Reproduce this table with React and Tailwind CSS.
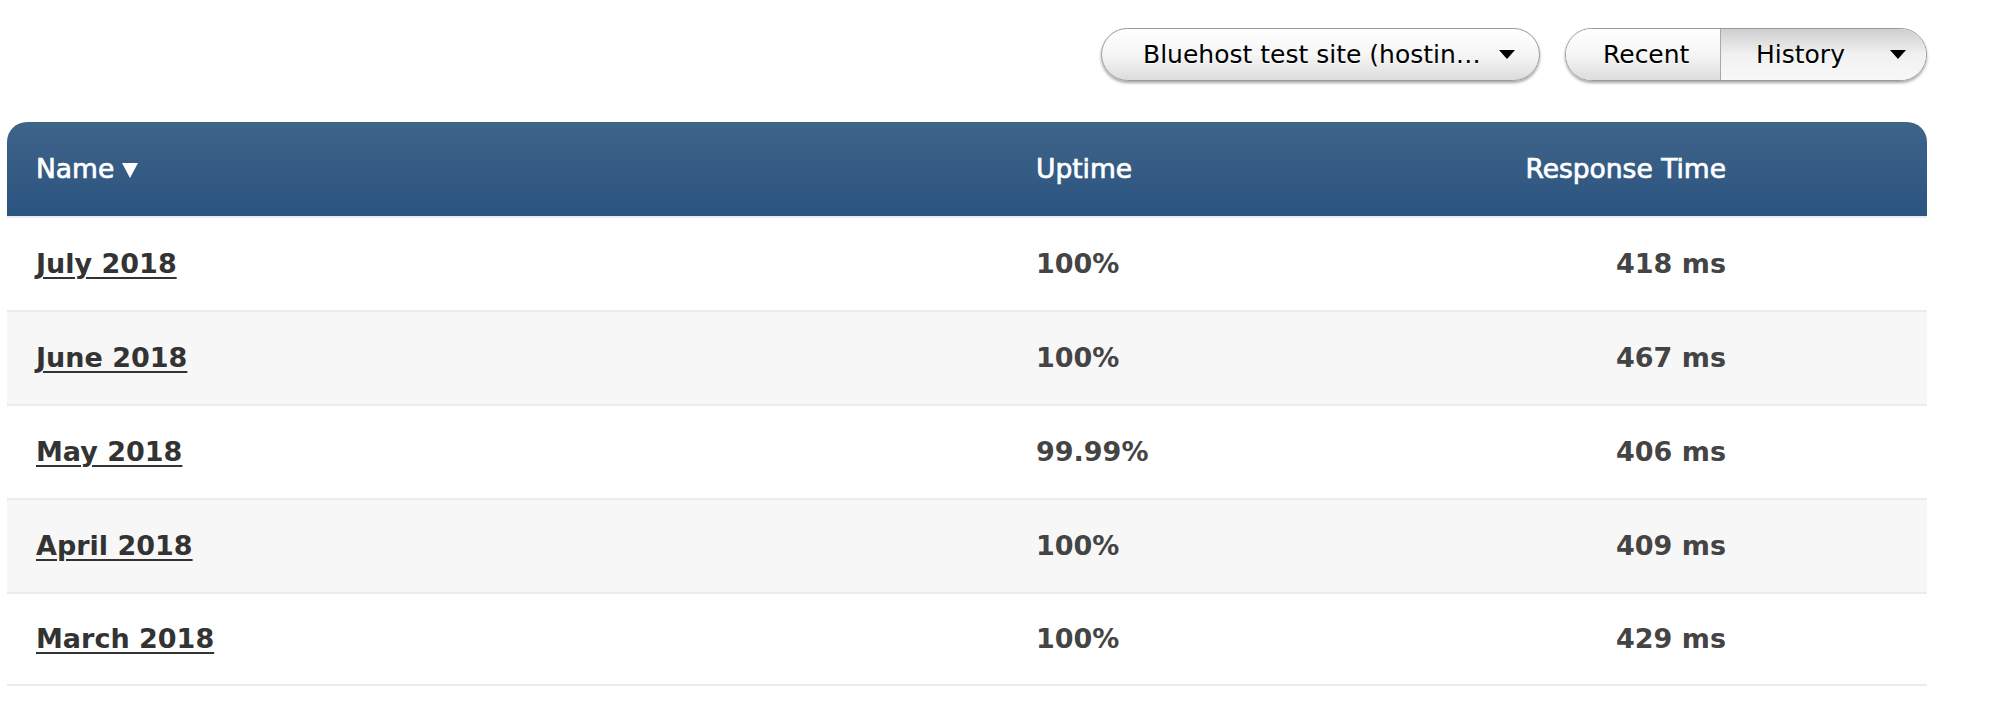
import React from "react";

const rows = [
  { name: "July 2018", uptime: "100%", rt: "418 ms" },
  { name: "June 2018", uptime: "100%", rt: "467 ms" },
  { name: "May 2018", uptime: "99.99%", rt: "406 ms" },
  { name: "April 2018", uptime: "100%", rt: "409 ms" },
  { name: "March 2018", uptime: "100%", rt: "429 ms" },
];

function Caret({ className }) {
  return (
    <svg className={className} width="16" height="9" viewBox="0 0 16 9">
      <path d="M0 0 L16 0 L8 9 Z" fill="currentColor" />
    </svg>
  );
}

export default function App() {
  return (
    <div className="w-[1989px] h-[707px] bg-white font-['DejaVu_Sans',sans-serif] overflow-hidden">
      <div className="flex justify-end gap-[25px] pt-[28px] pr-[62px] h-[122px]">
        <button className="h-[53px] w-[439px] rounded-full border border-[#9a9a9a] bg-linear-to-b from-white via-[#f6f6f6] to-[#dcdcdc] shadow-[0_2px_3px_rgba(0,0,0,0.35)] flex items-center pl-[41px] pr-[24px] text-[25px] text-black [text-shadow:0_1px_0_#fff]">
          <span className="flex-1 text-left whitespace-nowrap">Bluehost test site (hostin…</span>
          <Caret className="text-black" />
        </button>
        <div className="h-[53px] w-[362px] rounded-full border border-[#9a9a9a] shadow-[0_2px_3px_rgba(0,0,0,0.35)] flex overflow-hidden text-[25px] text-black [text-shadow:0_1px_0_#fff]">
          <div className="w-[155px] flex items-center pl-[37px] bg-linear-to-b from-white via-[#f6f6f6] to-[#dcdcdc] border-r border-[#a8a8a8]">
            Recent
          </div>
          <div className="flex-1 flex items-center pl-[35px] pr-[20px] bg-linear-to-b from-[#cfcfcf] via-[#f1f1f1] to-[#f8f8f8]">
            <span className="flex-1">History</span>
            <Caret className="text-black" />
          </div>
        </div>
      </div>

      <div className="ml-[7px] w-[1920px]">
        <div className="h-[94px] rounded-t-[20px] bg-linear-to-b from-[#3f6489] to-[#2b5480] grid grid-cols-[1000px_1fr_auto] items-center pl-[29px] pr-[201px] text-white text-[26.5px] [-webkit-text-stroke:0.7px_white]">
          <div className="flex items-center gap-[8px]">
            <span>Name</span>
            <svg width="16" height="15" viewBox="0 0 16 15" className="mt-[2px]">
              <path d="M0 0 L16 0 L8 15 Z" fill="white" />
            </svg>
          </div>
          <div>Uptime</div>
          <div className="text-right">Response Time</div>
        </div>
        {rows.map((r, i) => (
          <div
            key={r.name}
            className={`h-[94px] border-t-2 border-[#ececec] grid grid-cols-[1000px_1fr_auto] items-center pl-[29px] pr-[201px] text-[27px] font-bold ${
              i % 2 === 1 ? "bg-[#f7f7f7]" : "bg-white"
            } ${i === rows.length - 1 ? "border-b-2" : ""}`}
          >
            <div>
              <a href="#" className="text-[#333] underline decoration-2 underline-offset-[4px]">
                {r.name}
              </a>
            </div>
            <div className="text-[#444]">{r.uptime}</div>
            <div className="text-right text-[#444]">{r.rt}</div>
          </div>
        ))}
      </div>
    </div>
  );
}
